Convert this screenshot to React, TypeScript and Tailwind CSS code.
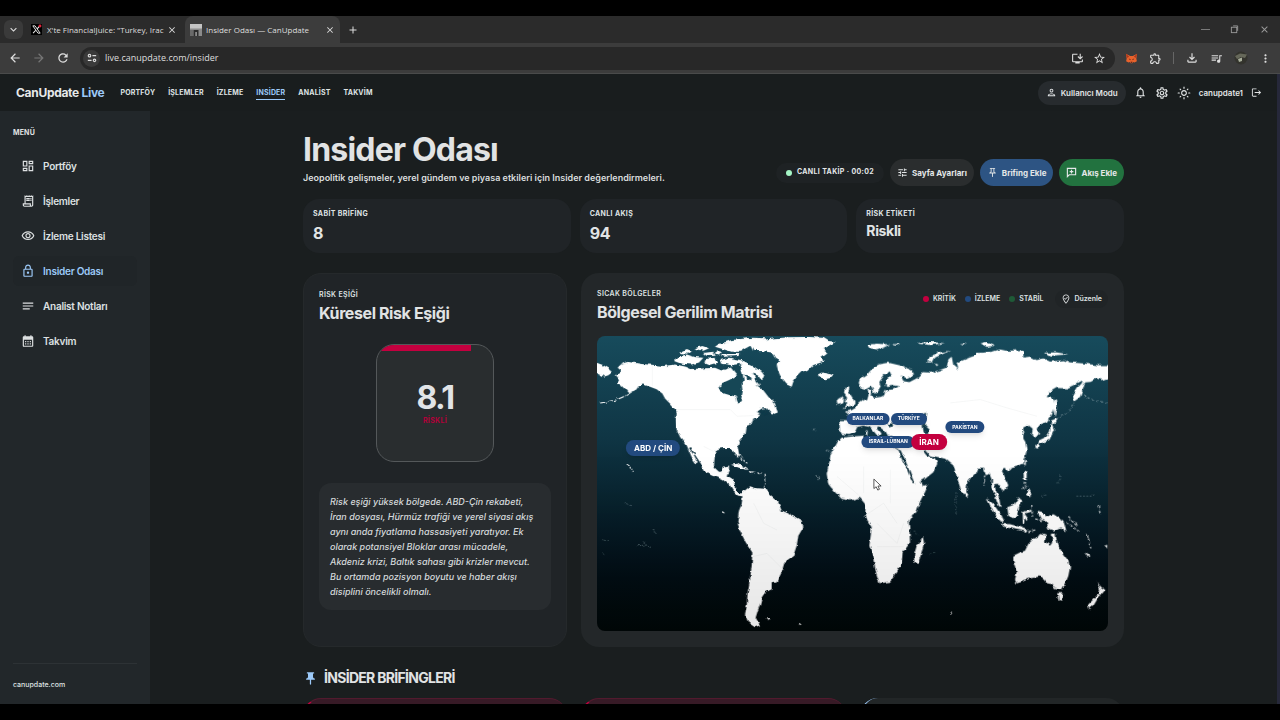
import type { ReactNode } from "react";
import {
  MdAdd,
  MdArrowBack,
  MdArrowForward,
  MdCalendarMonth,
  MdClose,
  MdExpandMore,
  MdLogout,
  MdMoreVert,
  MdNotes,
  MdOutlineDashboard,
  MdOutlineExtension,
  MdOutlineFileDownload,
  MdOutlineInstallDesktop,
  MdOutlineLightMode,
  MdOutlineLock,
  MdOutlineNotifications,
  MdOutlinePerson,
  MdOutlineReceiptLong,
  MdOutlineSettings,
  MdOutlineVisibility,
  MdOutlineWhereToVote,
  MdPushPin,
  MdOutlinePushPin,
  MdQueueMusic,
  MdRefresh,
  MdStarOutline,
  MdTune,
} from "react-icons/md";

function XLogo() {
  return (
    <svg viewBox="0 0 12 12" className="size-[11px] shrink-0" aria-hidden="true">
      <rect width="12" height="12" fill="#000" />
      <path d="M2 2h2.4L10 10H7.6z" fill="none" stroke="#eee" strokeWidth="1" />
      <path d="M9.6 2 6.7 5.3M5.2 6.8 2.3 10" stroke="#eee" strokeWidth="1.1" />
      <circle cx="9.8" cy="2.2" r="1.6" fill="#e0243c" />
    </svg>
  );
}

function SiteIcon() {
  return (
    <svg viewBox="0 0 12 12" className="size-[12px] shrink-0" aria-hidden="true">
      <rect width="12" height="12" fill="#8b8b8b" />
      <rect width="12" height="4.5" fill="#c4c4c4" />
      <path d="M3.5 6h5v6H7V8H5.2v4H3.5z" fill="#2c2c2c" />
      <path d="M0 6h3v6H0z" fill="#6a6a6a" />
    </svg>
  );
}

function SiteControls() {
  return (
    <svg viewBox="0 0 12 12" className="size-[10px]" fill="none" stroke="#dcdcdc" strokeWidth="1.4" aria-hidden="true">
      <circle cx="3" cy="3.2" r="1.5" />
      <path d="M6.5 3.2H11M1 8.8h4.5" />
      <circle cx="9" cy="8.8" r="1.5" />
    </svg>
  );
}

function Fox() {
  return (
    <svg viewBox="0 0 14 14" className="size-[13px]" aria-hidden="true">
      <path d="M1 2l4.6 2.4h2.8L13 2l-.8 5 .6 3-2.6 1.4-1.4-.6-1 1.2H6.200l-1-1.200-1.400.6L1.200 10l.6-3z" fill="#e8622c" />
      <path d="M4 7l2 .8-.4 1.200zM10 7l-2 .8.4 1.200zM6 10.500h2l-.4 1H6.400z" fill="#3a1d17" />
      <path d="M1 2l3.500 3-2.500 1.500zM13 2 9.500 5 12 6.500z" fill="#a8391f" />
    </svg>
  );
}

function Avatar() {
  return (
    <svg viewBox="0 0 14 14" className="size-[14px]" aria-hidden="true">
      <circle cx="7" cy="7" r="6.500" fill="#33332d" />
      <path d="M1 5l5-2.500 7 1L11 7 7 6 3 8z" fill="#66685a" />
      <path d="M4 8l4-1.500L8 10l-3 1z" fill="#aab09c" />
    </svg>
  );
}

function AddFeed() {
  return (
    <svg viewBox="0 0 24 24" className="size-[11px]" fill="none" stroke="currentColor" strokeWidth="2.5" aria-hidden="true">
      <path d="M3 3h18v14H7l-4 4z" />
      <path d="M12 6v8M8 10h8" />
    </svg>
  );
}

function BrowserChrome() {
  const iconButton = "flex items-center justify-center";
  return (
    <div className="font-['Open_Sans','Noto_Sans',sans-serif] text-[#dedede]">
      <div className="flex h-[27px] items-center bg-[#2b2b2b] pl-1">
        <button aria-label="Sekme ara" className="flex size-[19px] items-center justify-center rounded-md bg-[#3a3a3a]">
          <MdExpandMore className="size-[13px]" />
        </button>
        <div className="ml-2 flex w-[154px] items-center pr-2 text-[8px]">
          <XLogo />
          <span className="ml-[5px] flex-1 whitespace-nowrap">X'te FinancialJuice: "Turkey, Irac</span>
          <button aria-label="Sekmeyi kapat">
            <MdClose className="size-[10px]" />
          </button>
        </div>
        <div className="flex h-full w-[155px] items-center gap-1 rounded-t-lg bg-[#3c3c3c] px-[5px] text-[8px]">
          <SiteIcon />
          <span className="flex-1 whitespace-nowrap">Insider Odası — CanUpdate</span>
          <button aria-label="Sekmeyi kapat">
            <MdClose className="size-[10px]" />
          </button>
        </div>
        <button aria-label="Yeni sekme" className="ml-[7px]">
          <MdAdd className="size-[12px]" />
        </button>
        <div className="ml-auto flex items-center gap-5 pr-[10px] text-[#9b9b9b]">
          <button aria-label="Simge durumuna küçült" className="w-[9px] border-b border-[#7a7a7a]" />
          <button aria-label="Geri yükle">
            <svg viewBox="0 0 10 10" className="size-[9px]" fill="none" stroke="currentColor" aria-hidden="true">
              <rect x="1.500" y="2.500" width="6" height="6" />
              <path d="M3.500 1h5v5.500" />
            </svg>
          </button>
          <button aria-label="Kapat">
            <MdClose className="size-[11px]" />
          </button>
        </div>
      </div>
      <div className="flex h-[31px] items-center border-b border-[#4a4b4b] bg-[#3c3c3c] pl-2">
        <div className="flex items-center gap-[10px]">
          <button aria-label="Geri" className={iconButton}>
            <MdArrowBack className="size-[14px]" />
          </button>
          <button aria-label="İleri" className={iconButton + " text-[#777]"}>
            <MdArrowForward className="size-[14px]" />
          </button>
          <button aria-label="Yenile" className={iconButton}>
            <MdRefresh className="size-[14px]" />
          </button>
        </div>
        <div className="ml-[10px] flex h-[23px] flex-1 items-center rounded-full bg-[#282828] px-[3px]">
          <span className="flex size-[17px] items-center justify-center rounded-full bg-[#3a3a3a]">
            <SiteControls />
          </span>
          <input
            aria-label="Adres çubuğu"
            readOnly
            value="live.canupdate.com/insider"
            className="ml-[5px] flex-1 bg-transparent text-[9px] outline-none"
          />
          <div className="flex items-center gap-[9px] pr-[6px]">
            <MdOutlineInstallDesktop className="size-[13px]" />
            <MdStarOutline className="size-[13px]" />
          </div>
        </div>
        <div className="ml-[10px] flex items-center gap-[11px] pr-[8px]">
          <Fox />
          <MdOutlineExtension className="size-[13px]" />
          <span className="h-[12px] w-px bg-[#666]" />
          <MdOutlineFileDownload className="size-[14px]" />
          <MdQueueMusic className="size-[13px]" />
          <Avatar />
          <MdMoreVert className="size-[13px]" />
        </div>
      </div>
    </div>
  );
}

const topLinks = ["PORTFÖY", "İŞLEMLER", "İZLEME", "INSİDER", "ANALİST", "TAKVİM"];

function TopBar() {
  return (
    <header className="flex h-[37px] items-center bg-[#191d1e] pl-4 pr-[15px]">
      <a href="#home" className="text-[12px] font-bold tracking-tight text-[#e6e9ea]">
        CanUpdate <span className="text-[#9cc9f8]">Live</span>
      </a>
      <nav className="ml-4 flex gap-[13px] text-[7px] leading-[13px] font-bold tracking-wide">
        {topLinks.map((label) => (
          <a
            key={label}
            href={"#" + label}
            className={
              label === "INSİDER"
                ? "border-b border-[#9cc9f8] text-[#9cc9f8]"
                : "border-b border-transparent text-[#dfe3e4]"
            }
          >
            {label}
          </a>
        ))}
      </nav>
      <div className="ml-auto flex items-center gap-2 text-[8px] font-semibold text-[#e2e5e6]">
        <button className="flex h-6 items-center gap-1 rounded-full bg-[#272b2e] px-2">
          <MdOutlinePerson className="size-[11px]" />
          Kullanıcı Modu
        </button>
        <button aria-label="Bildirimler">
          <MdOutlineNotifications className="size-[13px]" />
        </button>
        <button aria-label="Ayarlar">
          <MdOutlineSettings className="size-[14px]" />
        </button>
        <button aria-label="Tema">
          <MdOutlineLightMode className="size-[14px]" />
        </button>
        <span>canupdate1</span>
        <button aria-label="Çıkış">
          <MdLogout className="size-[11px]" />
        </button>
      </div>
    </header>
  );
}

const menu = [
  { label: "Portföy", icon: MdOutlineDashboard },
  { label: "İşlemler", icon: MdOutlineReceiptLong },
  { label: "İzleme Listesi", icon: MdOutlineVisibility },
  { label: "Insider Odası", icon: MdOutlineLock, active: true },
  { label: "Analist Notları", icon: MdNotes },
  { label: "Takvim", icon: MdCalendarMonth },
];

function Sidebar() {
  return (
    <aside className="flex w-[150px] shrink-0 flex-col bg-[#22272a] px-[13px]">
      <p className="mt-4 text-[7px] leading-3 font-bold tracking-wide text-[#e0e3e4]">MENÜ</p>
      <nav className="mt-3 flex flex-col gap-[5px]">
        {menu.map(({ label, icon: Icon, active }) => (
          <a
            key={label}
            href={"#" + label}
            className={
              "flex h-[30px] items-center gap-2 rounded-md px-2 text-[10px] font-semibold tracking-tight " +
              (active ? "bg-[#202528] text-[#9cc9f8]" : "text-[#dde0e1]")
            }
          >
            <Icon className="size-[14px]" />
            {label}
          </a>
        ))}
      </nav>
      <div className="mt-auto border-t border-[#2d3235] pt-[15px] pb-[13px] text-[7px] leading-3 font-medium text-[#dfe2e3]">
        canupdate.com
      </div>
    </aside>
  );
}

function PageHeading() {
  const action = "flex h-[27px] items-center gap-1 rounded-full px-[7px] text-[8px] font-bold";
  return (
    <div className="flex items-end justify-between">
      <div>
        <h1 className="text-[32px] leading-[40px] font-bold tracking-tight text-[#e1e3e4]">Insider Odası</h1>
        <p className="text-[9px] leading-4 font-semibold text-[#d9dcdd]">
          Jeopolitik gelişmeler, yerel gündem ve piyasa etkileri için Insider değerlendirmeleri.
        </p>
      </div>
      <div className="flex items-center gap-[6px] text-[#e4e7e8]">
        <div className="flex h-5 items-center gap-[5px] rounded-full bg-[#1e2224] px-[10px] text-[7px] font-bold tracking-wider">
          <span className="size-[6px] rounded-full bg-[#a5f5c5]" />
          CANLI TAKİP · 00:02
        </div>
        <button className={action + " bg-[#2a2d2e]"}>
          <MdTune className="size-[11px]" />
          Sayfa Ayarları
        </button>
        <button className={action + " bg-[#2d5483]"}>
          <MdOutlinePushPin className="size-[11px]" />
          Brifing Ekle
        </button>
        <button className={action + " bg-[#22723f]"}>
          <AddFeed />
          Akış Ekle
        </button>
      </div>
    </div>
  );
}

function Stat({ label, children }: { label: string; children: ReactNode }) {
  return (
    <div className="h-[54px] rounded-2xl bg-[#202427] px-[10px] pt-[9px]">
      <p className="text-[7px] leading-3 font-bold tracking-wider text-[#dfe2e3]">{label}</p>
      {children}
    </div>
  );
}

function RiskPanel() {
  return (
    <section className="flex flex-col rounded-[18px] border border-[#25292b] bg-[#202427] px-[15px] pt-[15px]">
      <p className="text-[7px] leading-3 font-semibold tracking-wider text-[#dfe2e3]">RİSK EŞİĞİ</p>
      <h2 className="mt-[2px] text-[16px] leading-[20px] font-bold tracking-tight text-[#e1e3e4]">Küresel Risk Eşiği</h2>
      <div className="mx-auto mt-[21px] flex size-[118px] flex-col overflow-hidden rounded-[18px] border border-[#54585a] bg-[#292d2f]">
        <div className="h-[6px] w-[81%] bg-[#c3003f]" />
        <p className="mt-[28px] text-center text-[32px] leading-[38px] font-bold tracking-tighter text-[#e1e4e7]">8.1</p>
        <p className="text-center text-[7px] leading-[8px] font-bold tracking-wider text-[#b3003a]">RİSKLİ</p>
      </div>
      <p className="mt-[21px] rounded-xl bg-[#282c2f] px-[11px] py-[11px] text-[9px] leading-[15px] font-medium text-[#d5d9db] italic">
        Risk eşiği yüksek bölgede. ABD-Çin rekabeti, İran dosyası, Hürmüz trafiği ve yerel siyasi akış aynı anda
        fiyatlama hassasiyeti yaratıyor. Ek olarak potansiyel Bloklar arası mücadele, Akdeniz krizi, Baltık sahası gibi
        krizler mevcut. Bu ortamda pozisyon boyutu ve haber akışı disiplini öncelikli olmalı.
      </p>
    </section>
  );
}

function WorldMap() {
  return (
    <svg viewBox="0 0 1533 882" preserveAspectRatio="none" className="block h-full w-full" role="img" aria-label="Dünya haritası">
      <defs>
        <linearGradient id="sea" x1="0" y1="0" x2="0" y2="1">
          <stop offset="0" stopColor="#174b5c" />
          <stop offset="0.35" stopColor="#0f3544" />
          <stop offset="0.6" stopColor="#071f2a" />
          <stop offset="0.82" stopColor="#020d14" />
          <stop offset="1" stopColor="#010707" />
        </linearGradient>
        <linearGradient id="shade" x1="0" y1="0" x2="0" y2="1">
          <stop offset="0.4" stopColor="#000" stopOpacity="0" />
          <stop offset="1" stopColor="#000" stopOpacity="0.1" />
        </linearGradient>
        <filter id="coast" x="-40" y="-40" width="1613" height="962" filterUnits="userSpaceOnUse">
          <feTurbulence type="fractalNoise" baseFrequency="0.06" numOctaves="2" seed="4" result="noise" />
          <feDisplacementMap in="SourceGraphic" in2="noise" scale="12" xChannelSelector="R" yChannelSelector="G" />
        </filter>
      </defs>
      <rect width="1533" height="882" fill="url(#sea)" />
      <g filter="url(#coast)" fill="#fff">
        {/* North America, the Arctic islands and Greenland */}
        <g transform="translate(-66 -213)">
          <path d="M120 330 140 318 128 308 140 295 160 290 200 297 240 300 265 303 300 298 330 305 345 312 380 310 420 308 440 316 465 308 475 300 490 296 512 310 530 330 525 345 545 360 565 375 580 395 600 415 607 440 590 445 575 428 560 430 545 440 560 445 550 455 535 460 530 475 515 485 512 505 500 520 492 530 488 545 493 570 488 578 480 562 470 548 445 548 430 550 420 565 417 600 420 608 432 619 442 618 447 603 462 600 462 612 455 630 470 638 478 650 480 670 492 683 505 683 502 692 488 690 476 678 465 660 440 640 410 630 385 615 378 595 360 568 348 545 342 548 356 568 368 590 364 594 350 575 335 540 315 515 305 490 303 465 305 445 300 432 285 415 270 400 262 385 245 372 225 365 205 358 190 360 185 372 160 384 150 372 138 360 125 355 132 345Z" />
          <path d="M190 362Q150 405 75 413" fill="none" stroke="#fff" strokeWidth="3" strokeDasharray="22 5" />
          <path d="M50 288 84 300 105 312 110 322 100 330 88 334 50 316Z" />
          <path d="M525 240 560 225 600 220 640 217 700 216 745 218 760 228 782 230 765 240 745 250 757 262 740 275 745 290 715 300 700 315 680 320 665 335 655 350 650 365 635 358 620 340 608 315 605 300 612 285 600 278 590 262 560 258 535 258Z" />
          <path d="M430 238 470 225 530 218 572 220 560 232 530 240 508 252 495 260 470 260 450 254 420 245Z" />
          <path d="M300 288 310 274 335 268 360 276 385 278 372 292 350 298 322 296Z" />
          <path d="M312 264 335 252 352 258 340 266ZM358 250 382 243 402 250 385 257ZM384 264 414 260 422 272 396 273ZM392 282 418 278 428 292 402 300 388 294ZM440 268 495 266 490 273 446 275ZM425 258 440 260 436 268 420 266Z" />
          <path d="M436 285 462 278 500 285 530 300 560 320 570 335 560 345 548 330 534 325 545 350 555 362 538 360 522 340 502 322 494 308 466 300 442 296Z" />
          <path d="M728 328 740 322 760 325 775 330 770 338 750 342 735 338ZM590 430 602 424 608 442 596 446Z" />
          <path d="M466 306 492 302 502 320 506 345 500 358 503 380 497 408 488 412 484 394 466 390 446 384 430 370 440 354 464 344 486 330Z" fill="#154656" />
          <path d="M508 328 524 332 530 346 514 340ZM470 300 500 296 492 304 474 308Z" fill="#154656" />
          <path d="M548 448 566 436 582 444 570 450Z" fill="#113a4a" />
        </g>
        {/* South America and the Caribbean */}
        <g transform="translate(-66 357)">
          <path d="M503 110 525 92 545 98 575 100 585 120 610 140 620 165 650 178 680 195 685 215 670 240 665 270 655 300 630 318 622 345 605 380 590 382 590 400 570 410 560 425 555 445 548 465 542 485 555 508 540 514 520 500 510 475 515 450 518 410 525 370 530 330 532 290 512 260 495 225 487 200 492 165 500 145Z" />
          <path d="M468 28 490 24 522 44 500 40ZM518 47 545 50 530 55ZM548 51 562 52 555 56ZM572 486 586 487 580 493ZM670 500 680 505 674 507ZM442 166 452 170 446 174Z" />
          <path d="M486 -10 500 6 498 14M505 10 518 26M570 58 573 80 568 98M155 28 165 35 172 46" fill="none" stroke="#fff" strokeWidth="3" strokeDasharray="7 4" />
          <path d="M235 220 240 232M150 142 168 154M185 270 215 268M205 258 230 278M80 248 98 254M84 290 90 298M726 60 734 66 728 74" fill="none" stroke="#8fa6ab" strokeWidth="2" strokeDasharray="4 4" />
        </g>
        {/* Europe, western Asia and northern Africa */}
        <g transform="translate(639 42)">
          <path d="M88 210 112 210 120 203 113 190 105 184 122 181 138 172 145 160 158 150 172 146 176 130 172 120 184 117 182 135 192 143 212 140 222 136 226 120 250 118 268 108 245 104 228 108 226 95 238 80 246 70 240 64 225 72 208 95 212 112 200 130 192 128 184 108 168 117 152 112 146 98 150 86 172 72 190 52 208 42 235 38 270 46 305 60 312 72 290 84 272 76 280 92 298 96 325 82 338 66 360 68 385 62 410 52 415 28 425 20 430 45 445 58 440 38 460 30 480 22 520 8 560 4 640 0 640 340 610 350 520 345 505 345 490 370 472 395 468 430 458 430 446 395 430 345 405 325 372 317 360 315 345 300 338 300 350 316 375 324 382 340 370 365 345 385 318 402 310 390 298 360 284 325 272 300 250 288 250 256 232 258 222 240 205 228 200 234 212 250 204 258 192 244 178 230 160 226 142 230 134 246 118 254 90 250Z" />
          <path d="M95 262 130 258 160 256 164 285 200 284 250 290 266 300 275 325 290 355 302 385 315 412 355 402 345 425 330 450 318 490 170 490 165 460 150 442 120 450 95 445 70 420 55 400 50 370 58 335 62 310 80 278Z" />
          <path d="M104 114 118 112 116 125 126 140 134 155 128 166 108 170 98 174 112 158 104 150 112 144 102 130ZM84 146 95 140 102 148 98 160 84 165 80 155ZM168 240 173 240 172 254 167 252ZM375 40 385 44 380 48Z" />
          <path d="M334 190 352 188 348 205 345 225 356 235 354 252 342 250 338 230 342 212ZM236 222 246 218 250 228 240 232Z" fill="#10394a" />
          <path d="M10 236 16 242M48 300 70 306M20 376 30 380 24 388" fill="none" stroke="#b3c3c7" strokeWidth="3" strokeDasharray="4 4" />
        </g>
        {/* Siberia, the Far East and Japan */}
        <g transform="translate(759 -213)">
          <path d="M380 264 420 262 450 253 490 262 500 280 540 275 560 285 580 280 600 290 640 285 660 292 700 295 740 300 800 300 800 330 755 345 740 340 722 350 705 352 700 370 690 395 672 408 668 390 680 370 695 355 698 346 675 358 650 370 620 368 600 380 590 395 610 400 615 425 605 450 590 470 570 478 560 490 567 505 557 517 545 507 548 490 535 480 512 490 524 500 514 510 526 530 530 555 522 582 500 604 480 610 380 610Z" />
          <path d="M228 292 240 275 265 262 300 258 275 268 255 278 248 292ZM52 240 80 236 120 238 100 248 80 256 60 252ZM200 235 240 230 285 235 240 240ZM392 235 410 230 435 242 410 246ZM585 263 620 262 655 268 600 272ZM125 238 150 236 140 242ZM330 238 350 236 342 242Z" />
          <path d="M603 466 622 458 618 472 606 474 612 495 598 524 578 532 564 538 568 526 588 516 600 498ZM612 400 618 404 620 430 614 455 611 430ZM556 538 566 540 564 550 557 548ZM522 586 528 582 527 600 522 598Z" />
          <path d="M620 458Q660 445 672 412M700 392 740 408 772 412" fill="none" stroke="#d9e3e5" strokeWidth="2" strokeDasharray="6 8" />
        </g>
        {/* Southern Africa, southern Asia and Oceania */}
        <g transform="translate(759 357)">
          <path d="M30 100 50 130 46 165 50 190 65 215 62 240 58 270 70 310 78 350 88 382 120 378 140 350 155 320 158 290 180 262 178 215 176 195 205 150 225 105 215 80Z" />
          <path d="M218 240 222 262 212 300 203 325 193 320 192 298 200 270 210 262ZM345 108 355 116 352 128 345 124Z" />
          <path d="M300 0 315 30 325 80 338 115 348 110 350 80 375 55 385 30 400 32 408 60 418 55 426 75 424 95 435 120 446 150 452 155 448 130 438 105 432 85 445 85 460 110 475 90 465 65 455 45 480 35 505 25 528 0ZM468 40 478 34 480 46 472 50Z" />
          <path d="M410 128 430 145 455 180 464 200 450 195 430 170ZM455 205 480 206 510 214 532 222 528 228 490 220 460 213ZM472 155 490 148 505 125 517 135 508 155 500 182 490 188 475 180ZM515 170 545 162 544 168 524 174 536 192 530 196 524 186 522 204 516 202ZM520 48 530 52 530 74 522 70ZM536 100 544 112 540 126 530 116ZM562 168 580 172 590 185 610 176 640 195 650 230 630 215 612 224 595 218 590 200 572 190Z" />
          <path d="M490 300 510 290 525 285 535 265 550 250 562 245 570 235 588 240 585 258 600 270 606 262 606 234 616 234 622 260 628 275 640 295 655 315 660 335 655 360 645 385 635 402 615 400 605 385 590 382 582 372 570 362 540 368 515 378 500 383 495 372 500 350 490 320ZM621 412 638 412 634 437 626 435Z" />
          <path d="M740 378 755 395 766 402 755 415 742 430 730 450 718 460 714 447 735 425 748 412 750 400ZM703 290 718 300 714 306ZM298 470 306 470 303 476ZM762 270 772 268 770 280Z" />
          <path d="M535 228 560 222M545 150 548 180M556 190 580 196M524 80 520 98 530 92M404 60 402 90M650 200 690 230M655 185 680 210M712 235 724 285M744 150 752 175" fill="none" stroke="#fff" strokeWidth="3" strokeDasharray="8 5" />
          <path d="M318 110V175M192 225 206 240M240 296 254 292M630 60 624 85M575 122 590 118M680 122 740 122" fill="none" stroke="#7f979d" strokeWidth="2" strokeDasharray="4 6" />
        </g>
      </g>
      {/* Faint country borders */}
      <g fill="none" stroke="#eceeee" strokeWidth="1.500">
        <path d="M166 90V150M238 220H400L420 240 470 238M320 330 350 345M470 500 500 560 540 580M466 660 510 650 560 700" />
        <path d="M720 420 790 480M800 390V470M880 400V500M800 540 860 500 900 560M840 560 900 620 920 560M840 630H920M1060 200 1150 190 1230 215 1320 240" />
      </g>
      <rect width="1533" height="882" fill="url(#shade)" />
    </svg>
  );
}

const hotspots = [
  { label: "ABD / ÇİN", place: "left-[11%] top-[38%]", look: "h-4 px-2 text-[8px] bg-[#224a7f]" },
  { label: "BALKANLAR", place: "left-[53%] top-[28%]", look: "h-3 px-[6px] text-[5px] bg-[#224a7f]" },
  { label: "TÜRKİYE", place: "left-[61%] top-[28%]", look: "h-3 px-[7px] text-[5px] bg-[#224a7f]" },
  { label: "PAKİSTAN", place: "left-[72%] top-[31%]", look: "h-3 px-[7px] text-[5px] bg-[#224a7f]" },
  { label: "İSRAİL-LÜBNAN", place: "left-[57%] top-[36%]", look: "h-3 px-[7px] text-[5px] bg-[#224a7f]" },
  { label: "İRAN", place: "left-[65%] top-[36%]", look: "h-4 px-2 text-[8px] bg-[#c3003f]" },
];

const legend = [
  { label: "KRİTİK", dot: "bg-[#c3003f]" },
  { label: "İZLEME", dot: "bg-[#224a7f]" },
  { label: "STABİL", dot: "bg-[#1f5a37]" },
];

function MapPanel() {
  return (
    <section className="flex flex-col rounded-[18px] bg-[#232729] p-4">
      <div className="flex items-start justify-between">
        <div>
          <p className="text-[7px] leading-[10px] font-semibold tracking-wider text-[#dfe2e3]">SICAK BÖLGELER</p>
          <h2 className="mt-[3px] text-[16px] leading-[20px] font-bold tracking-tight text-[#e1e3e4]">Bölgesel Gerilim Matrisi</h2>
        </div>
        <div className="mt-[1px] flex items-center gap-[9px] text-[7px] font-semibold text-[#dfe2e3]">
          {legend.map(({ label, dot }) => (
            <span key={label} className="flex items-center gap-1">
              <span className={"size-[6px] rounded-full " + dot} />
              {label}
            </span>
          ))}
          <button className="ml-[3px] flex h-[18px] items-center gap-[3px] rounded-full bg-[#202426] px-[6px]">
            <MdOutlineWhereToVote className="size-[10px]" />
            Düzenle
          </button>
        </div>
      </div>
      <div className="relative mt-[14px] aspect-[511/295] overflow-hidden rounded-lg">
        <WorldMap />
        {hotspots.map(({ label, place, look }) => (
          <button
            key={label}
            className={
              "absolute flex -translate-x-1/2 -translate-y-1/2 items-center rounded-full font-bold whitespace-nowrap text-white shadow-md " +
              place +
              " " +
              look
            }
          >
            {label}
          </button>
        ))}
        <svg viewBox="0 0 10 14" className="absolute top-[48%] left-[54%] h-[13px] w-[9px]" aria-hidden="true">
          <path d="M1 1v10.500l2.500-2 1.800 3.700 1.900-.9-1.700-3.600H9z" fill="#fff" stroke="#333" strokeWidth="0.900" />
        </svg>
      </div>
    </section>
  );
}

export default function App() {
  return (
    <div className="flex h-screen flex-col overflow-hidden bg-black py-4 font-['Inter',sans-serif]">
      <BrowserChrome />
      <div className="flex min-h-0 flex-1 flex-col border-r-3 border-[#26283a] bg-[#1a1e1f]">
        <TopBar />
        <div className="flex min-h-0 flex-1">
          <Sidebar />
          <main className="min-w-0 flex-1 overflow-hidden px-4 pt-[19px]">
            <div className="mx-auto max-w-[821px]">
              <PageHeading />
              <div className="mt-[13px] grid grid-cols-3 gap-[9px]">
                <Stat label="SABİT BRİFİNG">
                  <p className="mt-[2px] text-[16px] leading-[22px] font-bold tracking-tight text-[#e1e4e5]">8</p>
                </Stat>
                <Stat label="CANLI AKIŞ">
                  <p className="mt-[2px] text-[16px] leading-[22px] font-bold tracking-tight text-[#e1e4e5]">94</p>
                </Stat>
                <Stat label="RİSK ETİKETİ">
                  <p className="mt-[2px] text-[14px] leading-[18px] font-bold tracking-tight text-[#e1e4e5]">Riskli</p>
                </Stat>
              </div>
              <div className="mt-5 grid grid-cols-[264px_1fr] gap-[14px]">
                <RiskPanel />
                <MapPanel />
              </div>
              <h2 className="mt-[21px] flex items-center gap-[6px] text-[14px] leading-5 font-bold tracking-tighter text-[#e1e3e4]">
                <MdPushPin className="size-[15px] text-[#9cc9f8]" />
                İNSİDER BRİFİNGLERİ
              </h2>
              <div className="mt-[10px] grid grid-cols-3 gap-[14px]">
                <article className="h-24 rounded-[18px] border-t border-l-2 border-t-[#521a2e] border-l-[#c3003f] bg-[#371a26]" />
                <article className="h-24 rounded-[18px] border-t border-l-2 border-t-[#521a2e] border-l-[#c3003f] bg-[#371a26]" />
                <article className="h-24 rounded-[18px] border-l-2 border-l-[#9cc9f8] bg-[#222627]" />
              </div>
            </div>
          </main>
        </div>
      </div>
    </div>
  );
}
